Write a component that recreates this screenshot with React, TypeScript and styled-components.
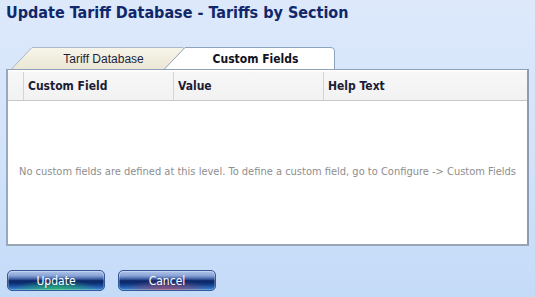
import React from "react";
import styled, { createGlobalStyle } from "styled-components";

const Global = createGlobalStyle`
  html, body { margin: 0; padding: 0; }
  body {
    width: 535px;
    height: 297px;
    overflow: hidden;
    background: linear-gradient(to bottom, #dde9fb 0%, #d3e3fa 50%, #c4dbf8 100%);
    font-family: Tahoma, "DejaVu Sans", sans-serif;
  }
`;

const Page = styled.div`
  display: flex;
  flex-direction: column;
  padding: 0 6px 0 6px;
  height: 297px;
  box-sizing: border-box;
`;

const Title = styled.h1`
  margin: 0;
  padding: 2px 0 0 0;
  height: 26px;
  font-family: "DejaVu Sans Condensed", "DejaVu Sans", sans-serif;
  font-weight: bold;
  font-size: 16px;
  line-height: 22px;
  color: #10286b;
  white-space: nowrap;
`;

const TabStrip = styled.div`
  display: flex;
  align-items: flex-end;
  margin-top: 19px;
  padding-left: 5px;
  height: 22px;
`;

const TabWrap = styled.div<{ $w: number; $active?: boolean }>`
  position: relative;
  width: ${(p) => p.$w}px;
  height: 22px;
  margin-left: ${(p) => (p.$active ? "-22px" : "0")};
  z-index: ${(p) => (p.$active ? 2 : 1)};
  display: flex;
  align-items: center;
  justify-content: center;
  padding-left: ${(p) => (p.$active ? "12px" : "10px")};
  box-sizing: border-box;
`;

const TabShape = styled.svg`
  position: absolute;
  left: 0;
  top: 0;
`;

const TabLabel = styled.span<{ $active?: boolean }>`
  position: relative;
  font-family: ${(p) =>
    p.$active ? '"DejaVu Sans Condensed", "DejaVu Sans", sans-serif' : '"Liberation Sans", sans-serif'};
  font-weight: ${(p) => (p.$active ? "bold" : "normal")};
  font-size: 12px;
  color: ${(p) => (p.$active ? "#111122" : "#1e1e3c")};
  padding-top: 2px;
`;

function Tab({ w, active, label }: { w: number; active?: boolean; label: string }) {
  const d = `M0.5 22 L21 0.5 L${w - 4} 0.5 Q${w - 0.5} 0.5 ${w - 0.5} 4 L${w - 0.5} 22`;
  const gid = active ? "gA" : "gI";
  return (
    <TabWrap $w={w} $active={active}>
      <TabShape width={w} height={22}>
        <defs>
          <linearGradient id={gid} x1="0" y1="0" x2="0" y2="1">
            {active ? (
              <>
                <stop offset="0" stopColor="#ffffff" />
                <stop offset="1" stopColor="#ffffff" />
              </>
            ) : (
              <>
                <stop offset="0" stopColor="#f7f5ea" />
                <stop offset="1" stopColor="#ebe7d6" />
              </>
            )}
          </linearGradient>
        </defs>
        <path d={d + " Z"} fill={`url(#${gid})`} stroke="none" />
        <path d={d} fill="none" stroke={active ? "#8ea3be" : "#a9b8c9"} strokeWidth="1" />
      </TabShape>
      <TabLabel $active={active}>{label}</TabLabel>
    </TabWrap>
  );
}

const Panel = styled.div`
  width: 523px;
  height: 177px;
  box-sizing: border-box;
  background: #ffffff;
  border-top: 1px solid #8ea1b9;
  border-left: 2px solid #97a9c0;
  border-right: 2px solid #8e9cb0;
  border-bottom: 2px solid #9aa5b5;
  display: flex;
  flex-direction: column;
`;

const HeaderRow = styled.div`
  display: grid;
  grid-template-columns: 15px 150px 150px 1fr;
  height: 30px;
  margin-top: 1px;
  background: linear-gradient(to bottom, #f7f7f7, #f2f2f2);
  border-top: 1px solid #fbfbfb;
  border-bottom: 1px solid #c8c8c8;
  box-sizing: border-box;
`;

const HeaderCell = styled.div<{ $first?: boolean }>`
  display: flex;
  align-items: center;
  padding-left: 4px;
  border-left: ${(p) => (p.$first ? "none" : "1px solid #d4d4d4")};
  font-family: "DejaVu Sans Condensed", "DejaVu Sans", sans-serif;
  font-weight: bold;
  font-size: 12px;
  color: #1c1c34;
`;

const Empty = styled.div`
  flex: 1;
  display: flex;
  align-items: center;
  justify-content: center;
  font-family: "DejaVu Sans Condensed", "DejaVu Sans", sans-serif;
  font-size: 11px;
  color: #8e8e8e;
  white-space: nowrap;
  padding-bottom: 2px;
`;

const ButtonRow = styled.div`
  display: flex;
  gap: 13px;
  margin-top: 24px;
  padding-left: 1px;
`;

const Btn = styled.button<{ $glow: string }>`
  width: 98px;
  height: 21px;
  border: 1px solid #34569a;
  border-radius: 5px;
  padding: 0;
  color: #ffffff;
  font-family: "DejaVu Sans Condensed", "DejaVu Sans", sans-serif;
  font-size: 12px;
  background:
    radial-gradient(ellipse 45% 55% at 50% 100%, ${(p) => p.$glow}, transparent),
    linear-gradient(to bottom, #b3c6ea 0%, #8aa3d6 25%, #3e5fa4 42%, #0a2463 52%, #10357c 68%, #2868b6 88%, #3a8ad2 100%);
  box-shadow: inset 0 0 0 1px rgba(255, 255, 255, 0.25);
`;

export default function App() {
  return (
    <>
      <Global />
      <Page>
        <Title>Update Tariff Database - Tariffs by Section</Title>
        <TabStrip>
          <Tab w={175} label="Tariff Database" />
          <Tab w={171} active label="Custom Fields" />
        </TabStrip>
        <Panel>
          <HeaderRow>
            <HeaderCell $first />
            <HeaderCell>Custom Field</HeaderCell>
            <HeaderCell>Value</HeaderCell>
            <HeaderCell>Help Text</HeaderCell>
          </HeaderRow>
          <Empty>
            No custom fields are defined at this level. To define a custom field, go to Configure -&gt; Custom Fields
          </Empty>
        </Panel>
        <ButtonRow>
          <Btn $glow="rgba(40, 190, 100, 0.85)">Update</Btn>
          <Btn $glow="rgba(170, 70, 100, 0.8)">Cancel</Btn>
        </ButtonRow>
      </Page>
    </>
  );
}
